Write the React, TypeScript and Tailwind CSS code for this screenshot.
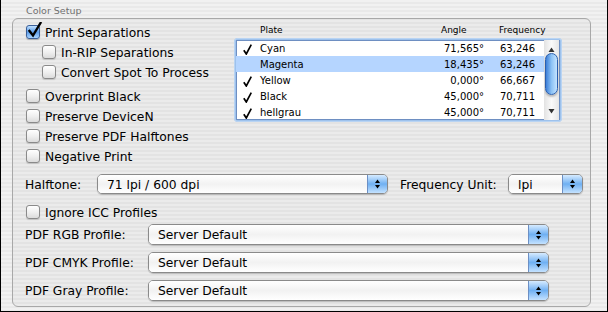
import React from "react";

function Checkbox({ checked }: { checked?: boolean }) {
  return (
    <div className="relative w-[14px] h-[14px] shrink-0">
      <div
        className={
          checked
            ? "w-[14px] h-[14px] rounded-[3px] border border-[#3a5f99] bg-gradient-to-b from-[#bfe0ff] via-[#5a9be8] to-[#a8d4ff] shadow-[0_1px_1px_rgba(0,0,0,0.25)]"
            : "w-[14px] h-[14px] rounded-[3px] border border-[#8a8a8a] bg-gradient-to-b from-[#ffffff] via-[#f0f0f0] to-[#dcdcdc] shadow-[0_1px_1px_rgba(0,0,0,0.15)]"
        }
      />
      {checked && (
        <svg className="absolute left-[1px] top-[-3px]" width="16" height="16" viewBox="0 0 16 16">
          <path d="M2.5 9 L6 13.5 L13.5 1" fill="none" stroke="#000" strokeWidth="2.4" strokeLinecap="square" />
        </svg>
      )}
    </div>
  );
}

function CheckRow({ label, checked, indent }: { label: string; checked?: boolean; indent?: boolean }) {
  return (
    <div className={"flex items-center h-[20px] " + (indent ? "pl-[16px]" : "")}>
      <Checkbox checked={checked} />
      <span className="ml-[5px] pt-[1px]">{label}</span>
    </div>
  );
}

function Arrows() {
  return (
    <svg width="7" height="12" viewBox="0 0 7 12">
      <polygon points="1,5 3.5,1.5 6,5" fill="#000" />
      <polygon points="1,7 3.5,10.5 6,7" fill="#000" />
    </svg>
  );
}

function Popup({ text, w, h }: { text: string; w: string; h: string }) {
  return (
    <div
      className={
        "flex items-stretch rounded-[5px] border border-[#8a8a8a] overflow-hidden shadow-[0_1px_1px_rgba(0,0,0,0.2)] " + w + " " + h
      }
    >
      <div className="flex-1 flex items-center pl-[9px] pt-[1px] bg-gradient-to-b from-[#ffffff] via-[#f2f2f2] to-[#ffffff]">
        {text}
      </div>
      <div className="w-[20px] flex items-center justify-center border-l border-[#6c8fc4] bg-gradient-to-b from-[#d6ebff] via-[#6fb0f2] to-[#c4e2ff]">
        <Arrows />
      </div>
    </div>
  );
}

function ListCheck() {
  return (
    <svg width="9" height="11" viewBox="0 0 9 11">
      <path d="M0.8 6.2 L3.3 10 L8.3 0.6" fill="none" stroke="#000" strokeWidth="1.7" />
    </svg>
  );
}

const rows = [
  { check: true, name: "Cyan", angle: "71,565°", freq: "63,246", sel: false },
  { check: false, name: "Magenta", angle: "18,435°", freq: "63,246", sel: true },
  { check: true, name: "Yellow", angle: "0,000°", freq: "66,667", sel: false },
  { check: true, name: "Black", angle: "45,000°", freq: "70,711", sel: false },
  { check: true, name: "hellgrau", angle: "45,000°", freq: "70,711", sel: false },
];

function PlateTable() {
  return (
    <div className="w-[328px] font-['DejaVu_Sans',sans-serif]">
      <div className="relative h-[16px] text-[9px] leading-[14px]">
        <span className="absolute left-[26px] top-[1px]">Plate</span>
        <span className="absolute left-[207px] top-[1px]">Angle</span>
        <span className="absolute left-[265px] top-[1px]">Frequency</span>
      </div>
      <div className="h-[84px] w-[328px] rounded-[4px] p-[2px] bg-[#9ec2ec] shadow-[inset_0_0_0_1px_#b9d4f3]">
        <div className="flex h-[80px] bg-white shadow-[inset_0_0_0_1px_#6e8fc2]">
          <div className="w-[308px] text-[10px] leading-[14px]">
            {rows.map((r) => (
              <div key={r.name} className={"flex items-center h-[16px] pt-[2px] " + (r.sel ? "bg-[#b5d5ff]" : "")}>
                <div className="w-[24px] pl-[7px] flex items-center">{r.check && <ListCheck />}</div>
                <div className="w-[166px]">{r.name}</div>
                <div className="w-[58px] text-right">{r.angle}</div>
                <div className="pl-[16px]">{r.freq}</div>
              </div>
            ))}
          </div>
          <div className="w-[15px] h-[80px] flex flex-col bg-gradient-to-r from-[#e2e2e2] via-[#fafafa] to-[#e6e6e6]">
            <div className="h-[13px] flex items-end justify-center pb-[1px]">
              <svg width="7" height="5" viewBox="0 0 7 5">
                <polygon points="0.5,5 3.5,0.5 6.5,5" fill="#333" />
              </svg>
            </div>
            <div className="mx-[1px] h-[42px] rounded-full border border-[#2b5fae] bg-gradient-to-r from-[#3d7fd8] via-[#8cc2f5] to-[#c3e3ff] shadow-[0_2px_2px_rgba(0,0,0,0.25)]" />
            <div className="flex-1" />
            <div className="h-[12px] flex items-start justify-center pt-[1px]">
              <svg width="7" height="5" viewBox="0 0 7 5">
                <polygon points="0.5,0 3.5,4.5 6.5,0" fill="#333" />
              </svg>
            </div>
          </div>
        </div>
      </div>
    </div>
  );
}

export default function App() {
  return (
    <div className="w-[608px] h-[312px] border-l border-r border-b border-black bg-[repeating-linear-gradient(to_bottom,#f1f1f1_0px,#f1f1f1_2px,#e9e9e9_2px,#e9e9e9_4px)] font-['DejaVu_Sans',sans-serif] text-black overflow-hidden">
      <div className="h-[18px] pl-[25px] pt-[5px] text-[9.5px] leading-[12px] text-[#707070]">Color Setup</div>
      <div className="ml-[11px] w-[579px] h-[289px] rounded-[6px] border border-[#a8a8a8] bg-[rgba(0,0,0,0.025)] pl-[13px] pt-[3px] text-[12.3px] leading-[16px]">
        <div className="flex">
          <div className="w-[208px]">
            <CheckRow label="Print Separations" checked />
            <CheckRow label="In-RIP Separations" indent />
            <CheckRow label="Convert Spot To Process" indent />
            <div className="mt-[4px]">
              <CheckRow label="Overprint Black" />
              <CheckRow label="Preserve DeviceN" />
              <CheckRow label="Preserve PDF Halftones" />
              <CheckRow label="Negative Print" />
            </div>
          </div>
          <PlateTable />
        </div>
        <div className="flex items-center mt-[8px] ml-[-1px]">
          <div className="w-[72px] pt-[1px]">Halftone:</div>
          <Popup text="71 lpi / 600 dpi" w="w-[291px]" h="h-[20px]" />
          <div className="ml-[12px] w-[108px] pt-[1px]">Frequency Unit:</div>
          <Popup text="lpi" w="w-[75px]" h="h-[20px]" />
        </div>
        <div className="mt-[8px]">
          <CheckRow label="Ignore ICC Profiles" />
        </div>
        <div className="flex items-center mt-[2px] ml-[-1px]">
          <div className="w-[123px] pt-[1px]">PDF RGB Profile:</div>
          <Popup text="Server Default" w="w-[401px]" h="h-[21px]" />
        </div>
        <div className="flex items-center mt-[7px] ml-[-1px]">
          <div className="w-[123px] pt-[1px]">PDF CMYK Profile:</div>
          <Popup text="Server Default" w="w-[401px]" h="h-[21px]" />
        </div>
        <div className="flex items-center mt-[7px] ml-[-1px]">
          <div className="w-[123px] pt-[1px]">PDF Gray Profile:</div>
          <Popup text="Server Default" w="w-[401px]" h="h-[21px]" />
        </div>
      </div>
    </div>
  );
}
